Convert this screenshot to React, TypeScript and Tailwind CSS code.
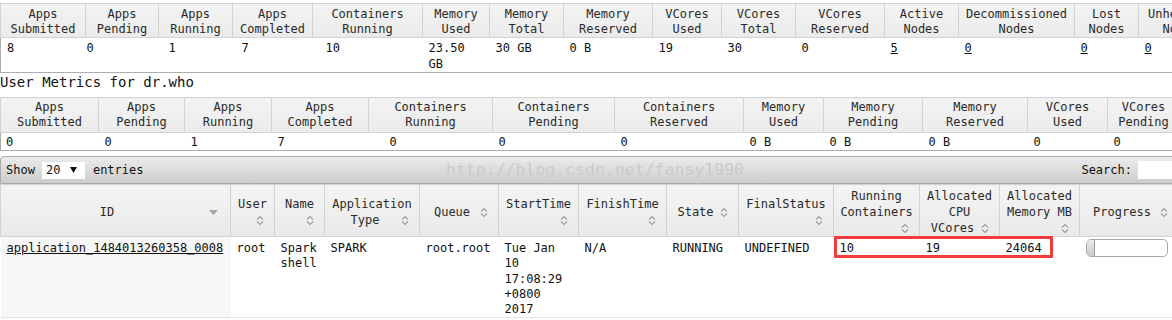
import React from 'react';

// 12px DejaVu Sans Mono gives the 7.2px glyph width of the page font
const mono = "font-['DejaVu_Sans_Mono','Liberation_Mono',monospace]";

interface Metric {
  top: string;
  bottom: string;
  w: string;
  value: string;
  pad?: string;
  link?: boolean;
}

const clusterMetrics: Metric[] = [
  { top: 'Apps', bottom: 'Submitted', w: 'w-[85px]', value: '8' },
  { top: 'Apps', bottom: 'Pending', w: 'w-[73px]', value: '0', pad: 'pl-[1px]' },
  { top: 'Apps', bottom: 'Running', w: 'w-[74px]', value: '1', pad: 'pl-[10px]' },
  { top: 'Apps', bottom: 'Completed', w: 'w-[80px]', value: '7', pad: 'pl-[9px]' },
  { top: 'Containers', bottom: 'Running', w: 'w-[110px]', value: '10', pad: 'pl-[13px]' },
  { top: 'Memory', bottom: 'Used', w: 'w-[67px]', value: '23.50 GB' },
  { top: 'Memory', bottom: 'Total', w: 'w-[74px]', value: '30 GB' },
  { top: 'Memory', bottom: 'Reserved', w: 'w-[89px]', value: '0 B' },
  { top: 'VCores', bottom: 'Used', w: 'w-[69px]', value: '19' },
  { top: 'VCores', bottom: 'Total', w: 'w-[74px]', value: '30' },
  { top: 'VCores', bottom: 'Reserved', w: 'w-[89px]', value: '0' },
  { top: 'Active', bottom: 'Nodes', w: 'w-[74px]', value: '5', link: true },
  { top: 'Decommissioned', bottom: 'Nodes', w: 'w-[116px]', value: '0', link: true },
  { top: 'Lost', bottom: 'Nodes', w: 'w-[64px]', value: '0', link: true },
  { top: 'Unhealthy', bottom: 'Nodes', w: 'w-[84px]', value: '0', link: true },
];

const userMetrics: Metric[] = [
  { top: 'Apps', bottom: 'Submitted', w: 'w-[98px]', value: '0', pad: 'pl-[5px]' },
  { top: 'Apps', bottom: 'Pending', w: 'w-[86px]', value: '0' },
  { top: 'Apps', bottom: 'Running', w: 'w-[87px]', value: '1' },
  { top: 'Apps', bottom: 'Completed', w: 'w-[97px]', value: '7' },
  { top: 'Containers', bottom: 'Running', w: 'w-[124px]', value: '0', pad: 'pl-[21px]' },
  { top: 'Containers', bottom: 'Pending', w: 'w-[122px]', value: '0' },
  { top: 'Containers', bottom: 'Reserved', w: 'w-[129px]', value: '0' },
  { top: 'Memory', bottom: 'Used', w: 'w-[80px]', value: '0 B' },
  { top: 'Memory', bottom: 'Pending', w: 'w-[99px]', value: '0 B' },
  { top: 'Memory', bottom: 'Reserved', w: 'w-[105px]', value: '0 B' },
  { top: 'VCores', bottom: 'Used', w: 'w-[80px]', value: '0' },
  { top: 'VCores', bottom: 'Pending', w: 'w-[72px]', value: '0' },
];

interface AppColumn {
  lines: string[];
  w: string;
  iconBelow?: boolean;
}

const appColumns: AppColumn[] = [
  { lines: ['ID'], w: 'w-[230px]' },
  { lines: ['User'], w: 'w-[44px]', iconBelow: true },
  { lines: ['Name'], w: 'w-[50px]', iconBelow: true },
  { lines: ['Application', 'Type'], w: 'w-[95px]' },
  { lines: ['Queue'], w: 'w-[79px]' },
  { lines: ['StartTime'], w: 'w-[80px]', iconBelow: true },
  { lines: ['FinishTime'], w: 'w-[88px]', iconBelow: true },
  { lines: ['State'], w: 'w-[72px]' },
  { lines: ['FinalStatus'], w: 'w-[95px]', iconBelow: true },
  { lines: ['Running', 'Containers'], w: 'w-[86px]', iconBelow: true },
  { lines: ['Allocated', 'CPU', 'VCores'], w: 'w-[80px]' },
  { lines: ['Allocated', 'Memory MB'], w: 'w-[80px]', iconBelow: true },
  { lines: ['Progress'], w: 'w-[99px]' },
];

const SortIcon = () => (
  <svg width="8" height="11" viewBox="0 0 8 11">
    <path d="M1 4.5L4 1.5L7 4.5M1 6.5L4 9.5L7 6.5" fill="none" stroke="#9d9d9d" strokeWidth="1.1" />
  </svg>
);

const SortedDesc = () => (
  <svg width="9" height="5" viewBox="0 0 9 5">
    <path d="M0 0H9L4.5 5Z" fill="#a5a5a5" />
  </svg>
);

const MetricsTable = ({
  metrics,
  width,
  headPad,
  rowPad,
}: {
  metrics: Metric[];
  width: string;
  headPad: string;
  rowPad: string;
}) => (
  <table className={`table-fixed ${width}`}>
    <colgroup>
      {metrics.map((m, i) => (
        <col key={i} className={m.w} />
      ))}
    </colgroup>
    <thead>
      <tr>
        {metrics.map((m, i) => (
          <th
            key={i}
            className={`border border-[#d3d3d3] bg-linear-to-b from-[#f3f3f3] to-[#ebebeb] px-[2px] text-center font-normal leading-[15px] text-[#2a2a2a] ${headPad}`}
          >
            {m.top}
            <br />
            {m.bottom}
          </th>
        ))}
      </tr>
    </thead>
    <tbody>
      <tr>
        {metrics.map((m, i) => (
          <td
            key={i}
            className={`border-b border-[#aeaeae] pr-[4px] align-top ${rowPad} ${i === 0 ? 'border-l' : ''} ${
              m.pad ?? 'pl-[6px]'
            }`}
          >
            {m.link ? <span className="underline">{m.value}</span> : m.value}
          </td>
        ))}
      </tr>
    </tbody>
  </table>
);

const AppHeader = ({ col, index }: { col: AppColumn; index: number }) => (
  <th className="border border-[#d3d3d3] bg-linear-to-b from-[#f4f4f4] to-[#e9e9e9] px-[4px] pt-[3px] pb-0 align-middle font-normal leading-[16px] text-[#2a2a2a]">
    <div className="flow-root text-center">
      {col.lines.map((l, i) => (
        <React.Fragment key={i}>
          {i > 0 && <br />}
          {l}
        </React.Fragment>
      ))}
      {!col.iconBelow && (
        <span className={`float-right flex h-[16px] items-center ${index === 0 ? 'mr-[8px]' : 'mr-[6px]'}`}>
          {index === 0 ? <SortedDesc /> : <SortIcon />}
        </span>
      )}
    </div>
    {col.iconBelow && (
      <div className="flex h-[16px] items-center justify-end pr-[6px]">
        <SortIcon />
      </div>
    )}
  </th>
);

export default function App() {
  const cell = 'align-top pt-[4px] pl-[6px] pr-[4px] leading-[15.3px]';

  return (
    <div className={`w-[1172px] h-[320px] overflow-hidden bg-white text-[12px] text-[#111] ${mono}`}>
      {/* Cluster Metrics */}
      <div className="pt-[3px]">
        <MetricsTable
          metrics={clusterMetrics}
          width="w-[1222px]"
          headPad="pt-[3px] pb-0"
          rowPad="pt-[2px] pb-0 leading-[16px]"
        />
      </div>

      <div className="text-[14px] leading-[18px] text-[#111]">User Metrics for dr.who</div>

      {/* User Metrics */}
      <div className="mt-[6px]">
        <MetricsTable
          metrics={userMetrics}
          width="w-[1179px]"
          headPad="pt-[2px] pb-[2px]"
          rowPad="pt-[2px] pb-0 leading-[15px]"
        />
      </div>

      {/* Applications */}
      <div className="mt-[5px] w-[1178px]">
        <div className="relative flex h-[28px] items-center rounded-t-[4px] border border-[#aaaaaa] bg-linear-to-b from-[#ebebeb] to-[#cdcdcd] pl-[5px] pr-[5px]">
          <span>Show</span>
          <span className="ml-[7px] flex h-[17px] w-[43px] items-center bg-white pl-[4px]">
            20
            <span className="ml-[10px] flex items-center">
              <svg width="7" height="6" viewBox="0 0 7 6">
                <path d="M0 0H7L3.5 6Z" fill="#111" />
              </svg>
            </span>
          </span>
          <span className="ml-[8px]">entries</span>
          <span className="pointer-events-none absolute inset-y-0 left-[445px] flex items-center text-[16.5px] text-[#cbcbcb]">
            http://blog.csdn.net/fansy1990
          </span>
          <span className="ml-auto">Search:</span>
          <span className="ml-[6px] h-[18px] w-[34px] bg-white" />
        </div>

        <table className="table-fixed w-[1178px]">
          <colgroup>
            {appColumns.map((c, i) => (
              <col key={i} className={c.w} />
            ))}
          </colgroup>
          <thead>
            <tr>
              {appColumns.map((c, i) => (
                <AppHeader key={i} col={c} index={i} />
              ))}
            </tr>
          </thead>
          <tbody>
            <tr className="border-b border-[#e4e4e4]">
              <td className={`${cell} bg-[#f7f7f7]`}>
                <span className="underline">application_1484013260358_0008</span>
              </td>
              <td className={cell}>root</td>
              <td className={cell}>Spark shell</td>
              <td className={cell}>SPARK</td>
              <td className={cell}>root.root</td>
              <td className={cell}>Tue Jan 10 17:08:29 +0800 2017</td>
              <td className={cell}>N/A</td>
              <td className={cell}>RUNNING</td>
              <td className={cell}>UNDEFINED</td>
              <td className={`${cell} relative`}>
                10
                <div className="absolute left-0 top-[-1px] h-[22px] w-[219px] border-[3px] border-[#f23b3b]" />
              </td>
              <td className={cell}>19</td>
              <td className={cell}>24064</td>
              <td className="align-top pt-[2px] pl-[6px]">
                <div className="h-[18px] w-[82px] overflow-hidden rounded-[5px] border border-[#a9a9a9] bg-white">
                  <div className="h-full w-[8px] border-r border-[#9a9a9a] bg-linear-to-b from-[#ececec] to-[#c9c9c9]" />
                </div>
              </td>
            </tr>
          </tbody>
        </table>
      </div>
    </div>
  );
}
